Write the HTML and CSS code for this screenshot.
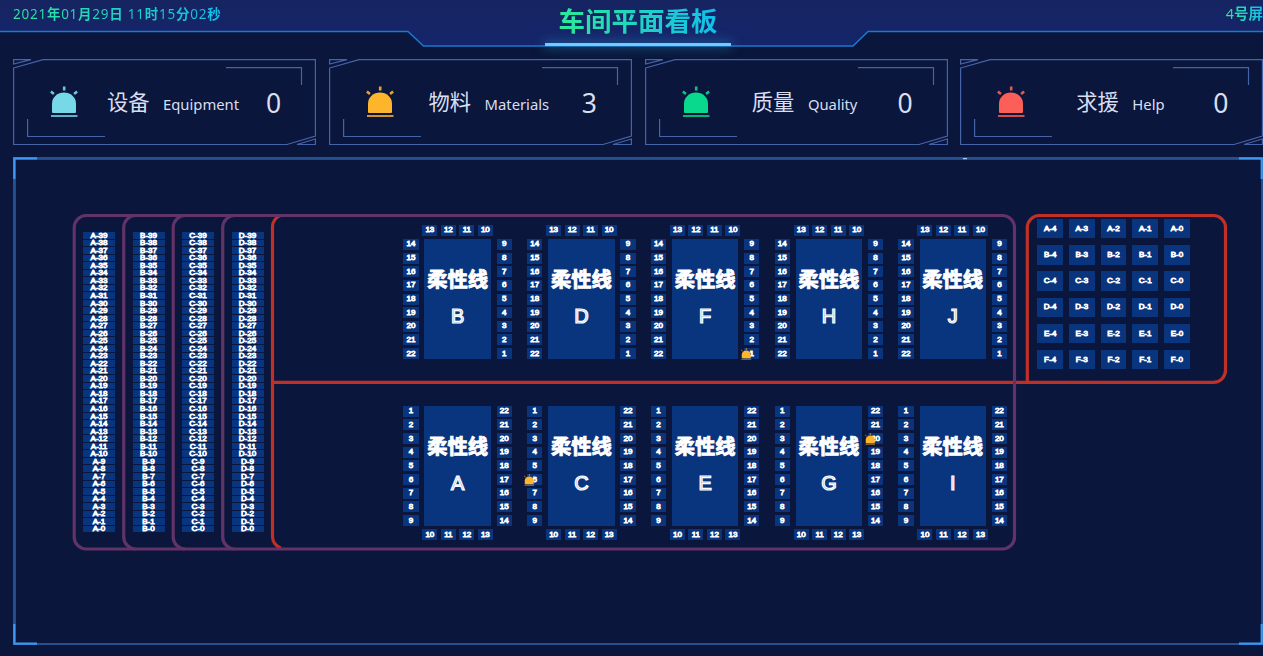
FILE: index.html
```html
<!DOCTYPE html>
<html lang="zh-CN">
<head>
<meta charset="utf-8">
<title>车间平面看板</title>
<link rel="stylesheet" href="styles.css">
</head>
<body>
<svg width="0" height="0" class="defs">
  <symbol id="lamp" viewBox="0 0 28 32">
    <path d="M2 26V17.500a12 11 0 0 1 24 0V26a1 1 0 0 1-1 1H3a1 1 0 0 1-1-1z" fill="currentColor"/>
    <path d="M1 30h26.500" stroke="currentColor" stroke-width="2" opacity=".8"/>
    <path d="M14.200.500v4M.900 5.600l3 2.500M27.100 5.600l-3 2.500" stroke="currentColor" stroke-width="2.600" opacity=".9"/>
  </symbol>
  <symbol id="frame" viewBox="0 0 303 87">
    <g fill="none" stroke="#4763a8" stroke-width="1.200">
      <path d="M.600 9L30 .600H302.400V77L274 85.500H.600z"/>
      <path d="M.600 5V.600H18z"/>
      <path d="M302.400 80v5.500H284z"/>
      <path d="M213 8.600h75.500V26M14.600 60v17.500H92"/>
    </g>
  </symbol>
  <linearGradient id="band" x1="0" y1="0" x2="0" y2="1">
    <stop offset="0" stop-color="#172462"/>
    <stop offset="1" stop-color="#14256a"/>
  </linearGradient>
</svg>

<header class="header">
  <svg class="header-shape" viewBox="0 0 1263 48">
    <path d="M0 31.500H408L423.500 46H853L868 31.500H1263V0H0z" fill="url(#band)"/>
    <path d="M0 31.500H408L423.500 46H853L868 31.500H1263" fill="none" stroke="#1b78d0" stroke-width="1.500"/>
  </svg>
  <div class="clock gradient">2021<b>年</b>01<b>月</b>29<b>日</b> 11<b>时</b>15<b>分</b>02<b>秒</b></div>
  <div class="title-box">
    <h1 class="title gradient">车间平面看板</h1>
    <div class="bar"></div>
  </div>
  <div class="screen"><span class="gradient">4<b>号屏</b></span></div>
</header>

<section class="cards">
  <article class="card">
    <svg class="frame"><use href="#frame"/></svg>
    <svg class="lamp cyan"><use href="#lamp"/></svg>
    <div class="label"><span class="cn">设备</span><span class="en">Equipment</span></div>
    <div class="count">0</div>
  </article>
  <article class="card">
    <svg class="frame"><use href="#frame"/></svg>
    <svg class="lamp amber"><use href="#lamp"/></svg>
    <div class="label"><span class="cn">物料</span><span class="en">Materials</span></div>
    <div class="count">3</div>
  </article>
  <article class="card">
    <svg class="frame"><use href="#frame"/></svg>
    <svg class="lamp green"><use href="#lamp"/></svg>
    <div class="label"><span class="cn">质量</span><span class="en">Quality</span></div>
    <div class="count">0</div>
  </article>
  <article class="card">
    <svg class="frame"><use href="#frame"/></svg>
    <svg class="lamp red"><use href="#lamp"/></svg>
    <div class="label"><span class="cn">求援</span><span class="en">Help</span></div>
    <div class="count">0</div>
  </article>
</section>

<main class="panel">
  <svg class="panel-frame" viewBox="0 0 1250 488">
    <rect x="1" y="1" width="1248" height="486" fill="none" stroke="#29589c" stroke-width="1.800"/>
    <path d="M2 2.500H1248M2.500 485V2" fill="none" stroke="#35456b"/>
    <path d="M1.300 22V1.300H24M1226 1.300h22.700V22M1248.700 467v19.700H1226M24 486.700H1.300V467" fill="none" stroke="#3c97f5" stroke-width="2.200"/>
    <path d="M950 1.700h4" stroke="#cfe6ff"/>
  </svg>
  <svg class="walls" viewBox="0 0 1250 488">
    <g fill="none" stroke-width="3.200">
      <path d="M268 58.300a12 12 0 0 0-8.500 12V379a12 12 0 0 0 8.500 12M260 225.300H1015" stroke="#c03026"/>
      <path d="M1014.300 225.300V70.500a12 12 0 0 1 12-12H1200.500a12 12 0 0 1 12 12V213.300a12 12 0 0 1-12 12z" stroke="#c03026"/>
      <rect x="61.200" y="58.500" width="940.300" height="333.500" rx="12" stroke="#613368"/>
      <path d="M122.700 58.500a12 12 0 0 0-12 12V380a12 12 0 0 0 12 12M172.200 58.500a12 12 0 0 0-12 12V380a12 12 0 0 0 12 12M221.700 58.500a12 12 0 0 0-12 12V380a12 12 0 0 0 12 12" stroke="#613368"/>
    </g>
  </svg>
  <div class="plan">
    <div class="racks" id="racks"></div>
    <div class="lines">
      <div class="line-row" id="upper"></div>
      <div class="line-row" id="lower"></div>
    </div>
    <div class="store" id="store"></div>
  </div>
</main>
<script src="plan.js"></script>
</body>
</html>
```
FILE: styles.css
```css
* { box-sizing: border-box; }
body {
  margin: 0;
  width: 1263px;
  height: 656px;
  overflow: hidden;
  background: #0a163b;
  color: #d9def0;
  font-family: "Noto Sans", "Noto Sans CJK SC", sans-serif;
}
.defs { position: absolute; }
svg { display: block; }

.header {
  position: relative;
  height: 59px;
  display: grid;
  grid-template-columns: 545px 186px 1fr;
  align-items: start;
}
.header-shape { position: absolute; top: 0; left: 0; width: 1263px; height: 48px; z-index: -1; }
.gradient {
  background: linear-gradient(90deg, #2ee89a, #10c0ec);
  -webkit-background-clip: text;
  background-clip: text;
  color: transparent;
}
.clock {
  justify-self: start;
  margin: 4px 0 0 13px;
  font-size: 13.500px;
  line-height: 20px;
  letter-spacing: .750px;
  white-space: nowrap;
}
.title-box { display: flex; flex-direction: column; align-items: center; }
.title {
  margin: 0;
  height: 43px;
  font-size: 26.5px;
  line-height: 43px;
  font-weight: 700;
  white-space: nowrap;
}
.bar {
  width: 186px;
  height: 3px;
  background: #74cbf8;
  box-shadow: 0 0 12px 1px rgba(35, 150, 200, .65);
}
.screen {
  justify-self: end;
  margin-top: 3px;
  font-size: 14.500px;
  line-height: 20px;
}

.cards {
  display: flex;
  gap: 12.800px;
  padding-left: 13px;
  width: 1270px;
}
.card {
  position: relative;
  flex: none;
  width: 303px;
  height: 87px;
  display: grid;
  grid-template-columns: 37px 28px 190px 1fr;
}
.frame { position: absolute; top: 0; left: 0; width: 303px; height: 87px; }
.lamp { grid-column: 2; width: 28px; height: 32px; margin-top: 27px; }
.cyan { color: #77d8e8; }
.amber { color: #fdb52b; }
.green { color: #08d98c; }
.red { color: #fb5f58; }
.label {
  display: flex;
  justify-content: center;
  align-items: baseline;
  gap: 13.500px;
  line-height: 86px;
}
.cn { font-size: 21.300px; }
.en { font-size: 14.800px; }
.count { width: 11px; display: flex; justify-content: center; font-size: 26.500px; line-height: 89px; }

.panel { position: relative; width: 1250px; height: 488px; margin: 11px 0 0 13px; }
.panel-frame, .walls { position: absolute; top: 0; left: 0; width: 1250px; height: 488px; }
.plan {
  position: relative;
  display: flex;
  align-items: flex-start;
  padding: 62px 0 0 70px;
  color: #fff;
  font-family: "Liberation Sans", "Noto Sans CJK SC", sans-serif;
  font-size: 8px;
  -webkit-text-stroke: .850px #fff;
}
.cell {
  position: relative;
  display: flex;
  align-items: center;
  justify-content: center;
  background: #09357f;
  line-height: 8px;
  white-space: nowrap;
}
.racks { display: flex; gap: 17.500px; margin-top: 13px; }
.rack { width: 32px; display: grid; grid-template-rows: repeat(40, 6.540px); row-gap: 1px; }
.rack .cell { padding-top: 1px; }

.lines { display: flex; flex-direction: column; gap: 46.600px; margin: 5.900px 0 0 139.800px; }
.line-row { display: flex; gap: 15.200px; }
.station {
  width: 108.600px;
  display: grid;
  grid-template-columns: 15.300px 66.400px 15.300px;
  justify-content: space-between;
  row-gap: 3px;
}
.caps { grid-column: 1 / -1; display: flex; justify-content: center; gap: 3.500px; height: 11px; }
.caps .cell { width: 15px; }
.side { display: grid; grid-template-rows: repeat(9, 11px); justify-content: stretch; align-content: space-between; height: 120.300px; }
.block {
  height: 120.300px;
  padding-top: 27px;
  display: flex;
  flex-direction: column;
  align-items: center;
  background: #09357f;
  font-size: 20px;
  white-space: nowrap;
}
.block-name { line-height: 28px; font-weight: 700; font-size: 20.300px; -webkit-text-stroke: .900px #fff; }
.block-letter { margin-top: 8px; line-height: 28px; color: #8fabdd; -webkit-text-stroke: 1.200px #fff; }
.alarm { position: absolute; left: -3px; top: 0; width: 10.500px; height: 12px; color: #fdb52b; }

.store {
  display: grid;
  grid-template-columns: repeat(5, 25.600px);
  grid-auto-rows: 19.300px;
  gap: 6.950px 6.100px;
  margin-left: 30.300px;
}
```
FILE: plan.js
```js
const cell = (text, alarm) =>
  `<div class="cell">${text}${alarm ? '<svg class="alarm"><use href="#lamp"/></svg>' : ''}</div>`;
const range = (from, to) => {
  const step = from < to ? 1 : -1;
  return Array.from({ length: Math.abs(to - from) + 1 }, (_, i) => from + i * step);
};
const alarms = new Set(['F-1', 'C-6', 'G-20']);

document.getElementById('racks').innerHTML = [...'ABCD'].map(r =>
  `<div class="rack">${range(39, 0).map(n => cell(`${r}-${n}`)).join('')}</div>`).join('');

document.getElementById('store').innerHTML = [...'ABCDEF'].map(r =>
  range(4, 0).map(n => cell(`${r}-${n}`)).join('')).join('');

function station(name, left, right, caps, capsFirst) {
  const cells = list => list.map(n => cell(n, alarms.has(`${name}-${n}`))).join('');
  const capRow = `<div class="caps">${cells(caps)}</div>`;
  const body = `<div class="side">${cells(left)}</div>
    <div class="block"><span class="block-name">柔性线</span><span class="block-letter">${name}</span></div>
    <div class="side">${cells(right)}</div>`;
  return `<div class="station">${capsFirst ? capRow + body : body + capRow}</div>`;
}

document.getElementById('upper').innerHTML = [...'BDFHJ'].map(n =>
  station(n, range(14, 22), range(9, 1), range(13, 10), true)).join('');
document.getElementById('lower').innerHTML = [...'ACEGI'].map(n =>
  station(n, range(1, 9), range(22, 14), range(10, 13), false)).join('');
```
